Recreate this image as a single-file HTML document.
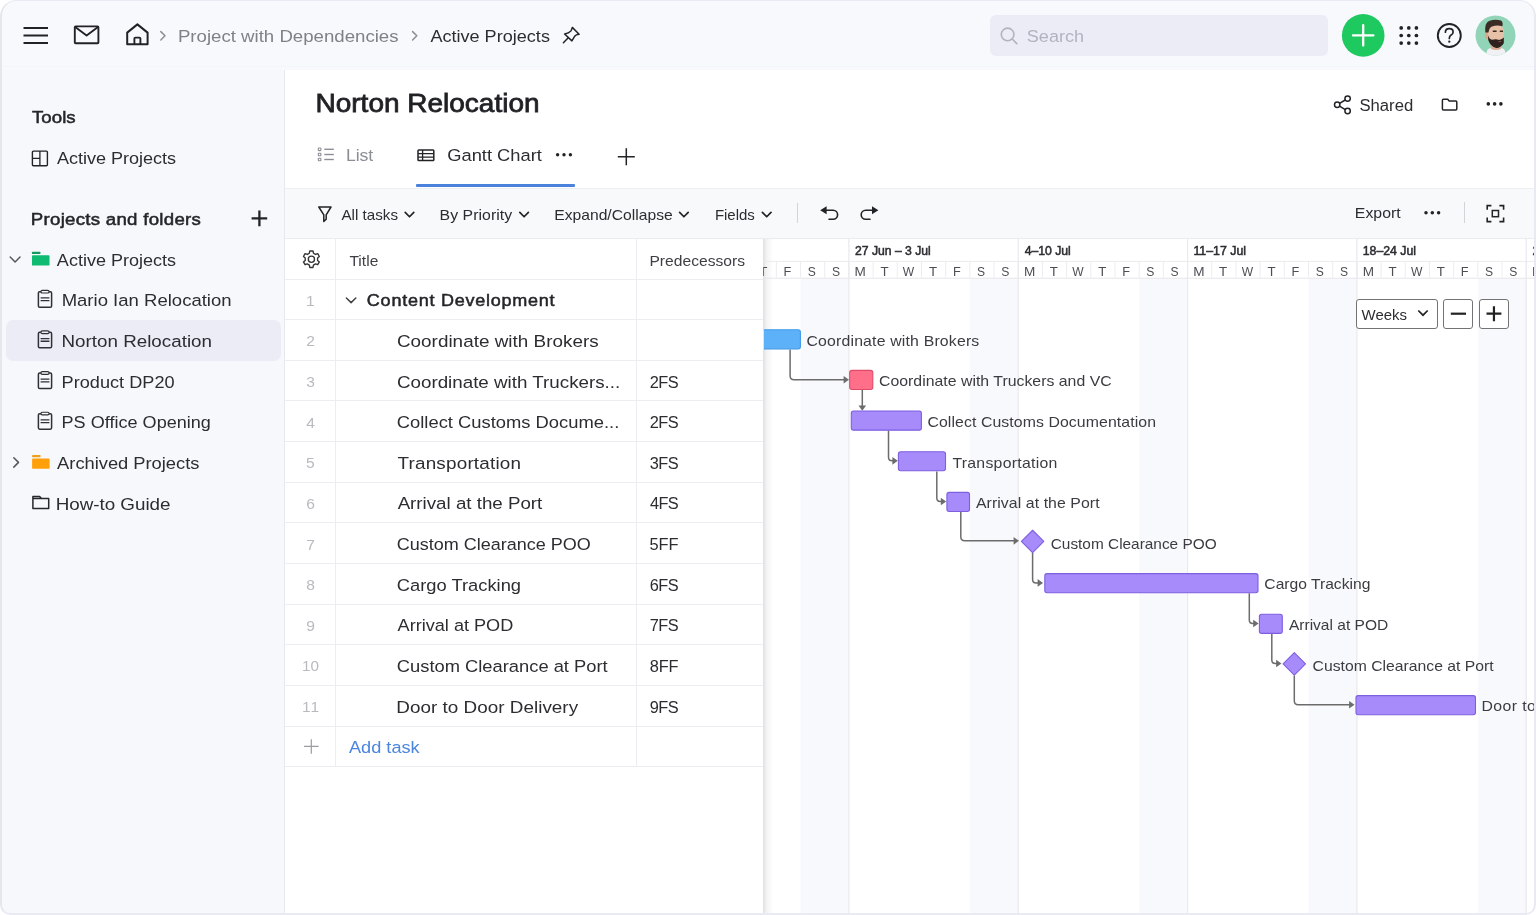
<!DOCTYPE html>
<html><head><meta charset="utf-8"><title>Norton Relocation - Gantt Chart</title>
<style>
*{box-sizing:border-box;margin:0;padding:0}
html,body{width:1536px;height:915px;background:#fff;overflow:hidden}
body{font-family:"Liberation Sans",sans-serif;position:relative}
#frame{position:absolute;left:0;top:0;width:1536px;height:915px;overflow:hidden;background:#fff;border-radius:16px 16px 10px 10px}
.a{position:absolute}
.t{position:absolute;white-space:pre;font-family:"Liberation Sans",sans-serif;left:0;top:0;transform-origin:0 0}
#txt{position:absolute;left:0;top:0;width:1536px;height:915px;will-change:transform}
svg{position:absolute;overflow:visible}
#edge{position:absolute;left:0;top:0;width:1536px;height:915px;border-radius:16px 16px 10px 10px;border:2px solid #eaeaf4;border-top-width:1.6px;border-bottom-width:2.4px;border-left-color:#e6e7ec;border-right-color:#e9e9f2;pointer-events:none}
</style></head>
<body>
<div id="frame">
<div class="a" style="left:0px;top:0px;width:1536px;height:70px;background:#f8f9fc;"></div>
<div class="a" style="left:0px;top:65.9px;width:1536px;height:1px;background:#f4f5f8;"></div>
<div class="a" style="left:0px;top:69.6px;width:1536px;height:1.1px;background:#ebecf0;"></div>
<div class="a" style="left:0px;top:70px;width:284px;height:845px;background:#f7f8fc;"></div>
<div class="a" style="left:284px;top:70px;width:1px;height:845px;background:#e8e9ee;"></div>
<div class="a" style="left:5.5px;top:319.8px;width:275px;height:41px;background:#ebecf5;border-radius:7px;"></div>
<div class="a" style="left:285px;top:70px;width:1251px;height:845px;background:#ffffff;"></div>
<div class="a" style="left:416px;top:184.0px;width:159px;height:3.0px;background:#4a82dc;border-radius:1px;"></div>
<div class="a" style="left:285px;top:188.4px;width:1251px;height:50px;background:#f8f9fb;"></div>
<div class="a" style="left:285px;top:187.5px;width:1251px;height:1px;background:#eeeff2;"></div>
<div class="a" style="left:285px;top:238px;width:1251px;height:1px;background:#ebecf0;"></div>
<div class="a" style="left:797.3px;top:203px;width:1.2px;height:20px;background:#d3d4da;"></div>
<div class="a" style="left:1463.8px;top:202px;width:1.2px;height:21px;background:#d3d4da;"></div>
<div class="a" style="left:990px;top:14.6px;width:338px;height:41.2px;background:#ebecf6;border-radius:6px;"></div>
<div class="a" style="left:285px;top:278.5px;width:478px;height:1px;background:#ededf1;"></div>
<div class="a" style="left:285px;top:319.15px;width:478px;height:1px;background:#ededf1;"></div>
<div class="a" style="left:285px;top:359.8px;width:478px;height:1px;background:#ededf1;"></div>
<div class="a" style="left:285px;top:400.45px;width:478px;height:1px;background:#ededf1;"></div>
<div class="a" style="left:285px;top:441.1px;width:478px;height:1px;background:#ededf1;"></div>
<div class="a" style="left:285px;top:481.75px;width:478px;height:1px;background:#ededf1;"></div>
<div class="a" style="left:285px;top:522.4px;width:478px;height:1px;background:#ededf1;"></div>
<div class="a" style="left:285px;top:563.05px;width:478px;height:1px;background:#ededf1;"></div>
<div class="a" style="left:285px;top:603.7px;width:478px;height:1px;background:#ededf1;"></div>
<div class="a" style="left:285px;top:644.35px;width:478px;height:1px;background:#ededf1;"></div>
<div class="a" style="left:285px;top:685.0px;width:478px;height:1px;background:#ededf1;"></div>
<div class="a" style="left:285px;top:725.65px;width:478px;height:1px;background:#ededf1;"></div>
<div class="a" style="left:285px;top:766.3px;width:478px;height:1px;background:#ededf1;"></div>
<div class="a" style="left:335px;top:239px;width:1px;height:527.8px;background:#ededf1;"></div>
<div class="a" style="left:635.5px;top:239px;width:1px;height:527.8px;background:#ededf1;"></div>
<div class="a" style="left:763px;top:239px;width:10px;height:676px;background:linear-gradient(90deg,rgba(40,44,60,0.15),rgba(40,44,60,0.06) 35%,rgba(40,44,60,0) 100%)"></div>
<svg class="a" style="left:763.5px;top:239px" width="772.5" height="676" viewBox="763.5 239 772.5 676">
<defs><clipPath id="gc"><rect x="763.5" y="239" width="772.5" height="676"/></clipPath></defs>
<g clip-path="url(#gc)">
<rect x="800.02" y="278.3" width="48.38" height="640" fill="#f8f9fc"/>
<rect x="969.35" y="278.3" width="48.38" height="640" fill="#f8f9fc"/>
<rect x="1138.68" y="278.3" width="48.38" height="640" fill="#f8f9fc"/>
<rect x="1308.01" y="278.3" width="48.38" height="640" fill="#f8f9fc"/>
<rect x="1477.34" y="278.3" width="48.38" height="640" fill="#f8f9fc"/>
<rect x="1646.67" y="278.3" width="48.38" height="640" fill="#f8f9fc"/>
<rect x="751.14" y="261.5" width="1" height="16" fill="#ededf1"/>
<rect x="775.33" y="261.5" width="1" height="16" fill="#ededf1"/>
<rect x="799.52" y="261.5" width="1" height="16" fill="#ededf1"/>
<rect x="823.71" y="261.5" width="1" height="16" fill="#ededf1"/>
<rect x="847.90" y="261.5" width="1" height="16" fill="#ededf1"/>
<rect x="872.09" y="261.5" width="1" height="16" fill="#ededf1"/>
<rect x="896.28" y="261.5" width="1" height="16" fill="#ededf1"/>
<rect x="920.47" y="261.5" width="1" height="16" fill="#ededf1"/>
<rect x="944.66" y="261.5" width="1" height="16" fill="#ededf1"/>
<rect x="968.85" y="261.5" width="1" height="16" fill="#ededf1"/>
<rect x="993.04" y="261.5" width="1" height="16" fill="#ededf1"/>
<rect x="1017.23" y="261.5" width="1" height="16" fill="#ededf1"/>
<rect x="1041.42" y="261.5" width="1" height="16" fill="#ededf1"/>
<rect x="1065.61" y="261.5" width="1" height="16" fill="#ededf1"/>
<rect x="1089.80" y="261.5" width="1" height="16" fill="#ededf1"/>
<rect x="1113.99" y="261.5" width="1" height="16" fill="#ededf1"/>
<rect x="1138.18" y="261.5" width="1" height="16" fill="#ededf1"/>
<rect x="1162.37" y="261.5" width="1" height="16" fill="#ededf1"/>
<rect x="1186.56" y="261.5" width="1" height="16" fill="#ededf1"/>
<rect x="1210.75" y="261.5" width="1" height="16" fill="#ededf1"/>
<rect x="1234.94" y="261.5" width="1" height="16" fill="#ededf1"/>
<rect x="1259.13" y="261.5" width="1" height="16" fill="#ededf1"/>
<rect x="1283.32" y="261.5" width="1" height="16" fill="#ededf1"/>
<rect x="1307.51" y="261.5" width="1" height="16" fill="#ededf1"/>
<rect x="1331.70" y="261.5" width="1" height="16" fill="#ededf1"/>
<rect x="1355.89" y="261.5" width="1" height="16" fill="#ededf1"/>
<rect x="1380.08" y="261.5" width="1" height="16" fill="#ededf1"/>
<rect x="1404.27" y="261.5" width="1" height="16" fill="#ededf1"/>
<rect x="1428.46" y="261.5" width="1" height="16" fill="#ededf1"/>
<rect x="1452.65" y="261.5" width="1" height="16" fill="#ededf1"/>
<rect x="1476.84" y="261.5" width="1" height="16" fill="#ededf1"/>
<rect x="1501.03" y="261.5" width="1" height="16" fill="#ededf1"/>
<rect x="1525.22" y="261.5" width="1" height="16" fill="#ededf1"/>
<rect x="1549.41" y="261.5" width="1" height="16" fill="#ededf1"/>
<rect x="763.5" y="260.9" width="780" height="1" fill="#ebebef"/>
<rect x="763.5" y="277.7" width="780" height="1" fill="#e6e6ea"/>
<rect x="847.80" y="239" width="1.2" height="680" fill="#e9e9ee"/>
<rect x="1017.13" y="239" width="1.2" height="680" fill="#e9e9ee"/>
<rect x="1186.46" y="239" width="1.2" height="680" fill="#e9e9ee"/>
<rect x="1355.79" y="239" width="1.2" height="680" fill="#e9e9ee"/>
<rect x="1525.12" y="239" width="1.2" height="680" fill="#e9e9ee"/>
<g transform="translate(-0.5,0.45)">
<path d="M790.1,349 V375.3 Q790.1,379.3 794.1,379.3 H846.0" fill="none" stroke="#6c6c6c" stroke-width="1.5"/><path d="M849.0,379.3 L843.6,375.5 L843.6,383.1 Z" fill="#6c6c6c"/>
<path d="M862.3,389.5 V406.5" fill="none" stroke="#6c6c6c" stroke-width="1.5"/><path d="M862.3,410.4 L858.5,405 L866.1,405 Z" fill="#6c6c6c"/>
<path d="M888.5,430 V456.9 Q888.5,460.4 892.0,460.4 H894.8" fill="none" stroke="#6c6c6c" stroke-width="1.5"/><path d="M897.8,460.4 L892.4,456.59999999999997 L892.4,464.2 Z" fill="#6c6c6c"/>
<path d="M936.8,471 V497.55 Q936.8,501.05 940.3,501.05 H943.2" fill="none" stroke="#6c6c6c" stroke-width="1.5"/><path d="M946.2,501.05 L940.8000000000001,497.25 L940.8000000000001,504.85 Z" fill="#6c6c6c"/>
<path d="M960.8,511.5 V536.4 Q960.8,540.4 964.8,540.4 H1016.0" fill="none" stroke="#6c6c6c" stroke-width="1.5"/><path d="M1019.0,540.4 L1013.6,536.6 L1013.6,544.1999999999999 Z" fill="#6c6c6c"/>
<path d="M1032.6,552 V578.95 Q1032.6,582.45 1036.1,582.45 H1040.0" fill="none" stroke="#6c6c6c" stroke-width="1.5"/><path d="M1043.0,582.45 L1037.6,578.6500000000001 L1037.6,586.25 Z" fill="#6c6c6c"/>
<path d="M1249.3,592.8 V619.5 Q1249.3,623.0 1252.8,623.0 H1255.6" fill="none" stroke="#6c6c6c" stroke-width="1.5"/><path d="M1258.6,623.0 L1253.1999999999998,619.2 L1253.1999999999998,626.8 Z" fill="#6c6c6c"/>
<path d="M1271.8,633.4 V659.5 Q1271.8,663.0 1275.3,663.0 H1278.5" fill="none" stroke="#6c6c6c" stroke-width="1.5"/><path d="M1281.5,663.0 L1276.1,659.2 L1276.1,666.8 Z" fill="#6c6c6c"/>
<path d="M1294.3,675 V700.3 Q1294.3,704.3 1298.3,704.3 H1351.5" fill="none" stroke="#6c6c6c" stroke-width="1.5"/><path d="M1354.5,704.3 L1349.1,700.5 L1349.1,708.0999999999999 Z" fill="#6c6c6c"/>
<rect x="750.50" y="329.30" width="49.90" height="19.1" rx="2.2" fill="#5cb1f8" stroke="#429ae8" stroke-width="1.1"/>
<rect x="849.70" y="369.95" width="23.10" height="19.1" rx="2.2" fill="#ff6f8a" stroke="#de4b68" stroke-width="1.1"/>
<rect x="851.30" y="410.60" width="70.10" height="19.1" rx="2.2" fill="#a78bfa" stroke="#7d5fe0" stroke-width="1.1"/>
<rect x="898.40" y="451.25" width="47.10" height="19.1" rx="2.2" fill="#a78bfa" stroke="#7d5fe0" stroke-width="1.1"/>
<rect x="946.90" y="491.90" width="22.60" height="19.1" rx="2.2" fill="#a78bfa" stroke="#7d5fe0" stroke-width="1.1"/>
<rect x="1044.80" y="573.20" width="213.20" height="19.1" rx="2.2" fill="#a78bfa" stroke="#7d5fe0" stroke-width="1.1"/>
<rect x="1259.40" y="613.85" width="22.90" height="19.1" rx="2.2" fill="#a78bfa" stroke="#7d5fe0" stroke-width="1.1"/>
<rect x="1356.00" y="695.15" width="119.50" height="19.1" rx="2.2" fill="#a78bfa" stroke="#7d5fe0" stroke-width="1.1"/>
<path d="M1021.3999999999999,541.0 L1032.6,529.8 L1043.8,541.0 L1032.6,552.2 Z" fill="#a78bfa" stroke="#7d5fe0" stroke-width="1.1" stroke-linejoin="round"/>
<path d="M1283.1,663.4 L1294.3,652.1999999999999 L1305.5,663.4 L1294.3,674.6 Z" fill="#a78bfa" stroke="#7d5fe0" stroke-width="1.1" stroke-linejoin="round"/>
</g>
</g></svg>
<div class="a" style="left:1355.6px;top:298.9px;width:82px;height:29.8px;background:#fff;border:1.25px solid #737373;border-radius:3px"></div>
<div class="a" style="left:1443.1px;top:298.9px;width:30.2px;height:29.8px;background:#fff;border:1.25px solid #737373;border-radius:3px"></div>
<div class="a" style="left:1479.1px;top:298.9px;width:29.6px;height:29.8px;background:#fff;border:1.25px solid #737373;border-radius:3px"></div>
<svg class="a" style="left:0;top:0" width="1536" height="915" viewBox="0 0 1536 915"><path d="M1418.3,310.5 L1423,315.2 L1427.7,310.5" fill="none" stroke="#222" stroke-width="1.7"/><path d="M1450.8,313.7 H1466" stroke="#222" stroke-width="2.2"/><path d="M1486.5,313.7 H1501.4 M1493.95,306.2 V321.2" stroke="#222" stroke-width="2.2"/></svg>
<svg class="a" style="left:0;top:0" width="1536" height="915" viewBox="0 0 1536 915">
<path d="M23.5,28 H48 M23.5,35.5 H48 M23.5,43 H48" stroke="#222326" stroke-width="2"/>
<rect x="74.8" y="26.4" width="23.6" height="16.8" rx="0.8" fill="none" stroke="#222326" stroke-width="1.9"/>
<path d="M75.2,27 L86.6,35.6 L98,27" fill="none" stroke="#222326" stroke-width="1.9" stroke-linejoin="round"/>
<path d="M127.2,44.3 V32.6 L137.4,24.4 L147.6,32.6 V44.3 Z" fill="none" stroke="#222326" stroke-width="2" stroke-linejoin="round"/>
<path d="M134.4,44.3 V38.6 q0,-1 1,-1 h4 q1,0 1,1 V44.3" fill="none" stroke="#222326" stroke-width="1.9"/>
<path d="M160.8,31.60 L165.0,35.8 L160.8,40.00" fill="none" stroke="#8d8f96" stroke-width="1.5" stroke-linecap="round" stroke-linejoin="round"/>
<path d="M412.6,31.60 L416.8,35.8 L412.6,40.00" fill="none" stroke="#8d8f96" stroke-width="1.5" stroke-linecap="round" stroke-linejoin="round"/>
<path d="M572.3,27.4 L579.1,34.2 Q575.5,34.6 574.6,36.4 Q573.2,38.8 571.9,40.9 L564.6,34 Q569,33.2 570.7,31.1 Q571.8,29.6 572.3,27.4 Z M568,38 L563.4,42.8" fill="none" stroke="#222326" stroke-width="1.5" stroke-linejoin="round" stroke-linecap="round"/>
<circle cx="1007.6" cy="34.4" r="6.3" fill="none" stroke="#b1b3bf" stroke-width="1.6"/><path d="M1012.2,39 L1016.8,43.6" stroke="#b1b3bf" stroke-width="1.6" stroke-linecap="round"/>
<circle cx="1363.2" cy="35.4" r="21.3" fill="#1ec960"/><path d="M1353,35.4 H1373.4 M1363.2,25.2 V45.6" stroke="#fff" stroke-width="2.3" stroke-linecap="round"/>
<circle cx="1401.2" cy="27.9" r="1.85" fill="#222326"/><circle cx="1408.8" cy="27.9" r="1.85" fill="#222326"/><circle cx="1416.4" cy="27.9" r="1.85" fill="#222326"/>
<circle cx="1401.2" cy="35.5" r="1.85" fill="#222326"/><circle cx="1408.8" cy="35.5" r="1.85" fill="#222326"/><circle cx="1416.4" cy="35.5" r="1.85" fill="#222326"/>
<circle cx="1401.2" cy="43.1" r="1.85" fill="#222326"/><circle cx="1408.8" cy="43.1" r="1.85" fill="#222326"/><circle cx="1416.4" cy="43.1" r="1.85" fill="#222326"/>
<circle cx="1449.3" cy="35.5" r="11.5" fill="none" stroke="#222326" stroke-width="1.9"/>
<path d="M1445.4,32.2 q0,-3.6 3.9,-3.6 q3.8,0 3.8,3.3 q0,2 -2,3.2 q-1.8,1.1 -1.8,3.3" fill="none" stroke="#222326" stroke-width="1.7" stroke-linecap="round"/><circle cx="1449.3" cy="41.7" r="1.15" fill="#222326"/>
<defs><clipPath id="av"><circle cx="1495.5" cy="35.4" r="20"/></clipPath></defs>
<circle cx="1495.5" cy="35.4" r="20" fill="#92d4b8"/>
<g clip-path="url(#av)"><path d="M1484.5,58 L1487.6,49.6 Q1491.5,46.4 1496,48 Q1500.5,46.6 1504.4,49.6 L1507,58 Z" fill="#f1f0f5"/><path d="M1490.5,44 L1501.5,44 L1501,49 Q1496,51 1491,49 Z" fill="#d9ad92"/><ellipse cx="1486.8" cy="35.4" rx="1.9" ry="3.7" fill="#d9a98c"/><path d="M1488,26.5 Q1488.4,24 1495,24.3 Q1503,24.8 1503.7,30 L1503.9,40 Q1500.5,46.5 1496,46.5 Q1490,45.5 1488,38 Z" fill="#e6c0a7"/><path d="M1485.3,32.4 Q1484.4,23 1489,21 Q1495,18.6 1501,20.4 Q1503.4,22 1502.4,26.2 Q1497,24.9 1492,26.4 Q1489.2,27.4 1488.5,32.4 Z" fill="#3b2b25"/><path d="M1488,35.2 Q1489.4,39.2 1492,39.8 Q1496,38.4 1499,40 Q1502,39.2 1503.9,37.4 L1503.8,43.2 Q1500.6,48.2 1496.2,48 Q1490.4,46.6 1488.2,40 Z" fill="#2f221e"/><path d="M1492.8,31.2 h3.8 M1499.8,31.2 h3.2" stroke="#3c261e" stroke-width="1.5"/><path d="M1498.6,41.6 h2.6" stroke="#8a5a4a" stroke-width="0.9"/></g>
<circle cx="1347.6" cy="98.6" r="2.7" fill="none" stroke="#222326" stroke-width="1.5"/><circle cx="1337.2" cy="104.8" r="2.7" fill="none" stroke="#222326" stroke-width="1.5"/><circle cx="1347.6" cy="111" r="2.7" fill="none" stroke="#222326" stroke-width="1.5"/><path d="M1339.6,103.4 L1345.2,100 M1339.6,106.2 L1345.2,109.6" stroke="#222326" stroke-width="1.5"/>
<path d="M1442.4,100.2 q0,-1 1,-1 h4.32 l1.44,1.84 h6.64 q1,0 1,1 v6.96 q0,1 -1,1 h-12.4 q-1,0 -1,-1 z" fill="none" stroke="#222326" stroke-width="1.5" stroke-linejoin="round"/>
<circle cx="1488.3" cy="103.9" r="1.8" fill="#222326"/><circle cx="1494.6" cy="103.9" r="1.8" fill="#222326"/><circle cx="1500.9" cy="103.9" r="1.8" fill="#222326"/>
<rect x="318.3" y="148.0" width="2.6" height="2.6" rx="0.6" fill="none" stroke="#8b8e95" stroke-width="1.1"/><path d="M324.3,149.3 H333.8" stroke="#8b8e95" stroke-width="1.4"/>
<rect x="318.3" y="153.2" width="2.6" height="2.6" rx="0.6" fill="none" stroke="#8b8e95" stroke-width="1.1"/><path d="M324.3,154.5 H333.8" stroke="#8b8e95" stroke-width="1.4"/>
<rect x="318.3" y="158.2" width="2.6" height="2.6" rx="0.6" fill="none" stroke="#8b8e95" stroke-width="1.1"/><path d="M324.3,159.5 H333.8" stroke="#8b8e95" stroke-width="1.4"/>
<rect x="418" y="150" width="15.8" height="10.6" rx="0.8" fill="none" stroke="#222326" stroke-width="1.5"/><path d="M418,153.6 H433.8 M418,157.1 H433.8 M422.6,150 V160.6" stroke="#222326" stroke-width="1.3"/>
<circle cx="557.6" cy="154.7" r="1.7" fill="#222326"/><circle cx="564" cy="154.7" r="1.7" fill="#222326"/><circle cx="570.4" cy="154.7" r="1.7" fill="#222326"/>
<path d="M617.8,156.8 H634.8 M626.3,148.3 V165.3" stroke="#222326" stroke-width="1.5"/>
<path d="M318.8,207 H331 L326.2,214.8 V219.2 L323.8,221.4 V214.8 Z" fill="none" stroke="#222326" stroke-width="1.5" stroke-linejoin="round"/>
<path d="M405.2,212.45 L409.50,216.75 L413.8,212.45" fill="none" stroke="#222326" stroke-width="1.7" stroke-linecap="round" stroke-linejoin="round"/>
<path d="M519.8,212.45 L524.10,216.75 L528.4,212.45" fill="none" stroke="#222326" stroke-width="1.7" stroke-linecap="round" stroke-linejoin="round"/>
<path d="M679.6,212.45 L683.90,216.75 L688.2,212.45" fill="none" stroke="#222326" stroke-width="1.7" stroke-linecap="round" stroke-linejoin="round"/>
<path d="M762.4,212.45 L766.70,216.75 L771.0,212.45" fill="none" stroke="#222326" stroke-width="1.7" stroke-linecap="round" stroke-linejoin="round"/>
<path d="M826,210.2 H833.1 A4.5,4.5 0 0 1 833.1,219.2 H829" fill="none" stroke="#222326" stroke-width="1.6" stroke-linecap="round"/><path d="M820.2,210.2 L826.6,206.2 L826.6,214.2 Z" fill="#222326"/>
<path d="M872.4,210.2 H865.7 A4.5,4.5 0 0 0 865.7,219.2 H870" fill="none" stroke="#222326" stroke-width="1.6" stroke-linecap="round"/><path d="M878.4,210.2 L872,206.2 L872,214.2 Z" fill="#222326"/>
<circle cx="1426" cy="212.8" r="1.75" fill="#222326"/><circle cx="1432.3" cy="212.8" r="1.75" fill="#222326"/><circle cx="1438.6" cy="212.8" r="1.75" fill="#222326"/>
<path d="M1487.2,209.79999999999998 V205.6 H1491.4 M1499.3999999999999,205.6 H1503.6 V209.79999999999998 M1503.6,217.4 V221.6 H1499.3999999999999 M1491.4,221.6 H1487.2 V217.4" fill="none" stroke="#222326" stroke-width="1.6"/>
<rect x="1492.3" y="210.5" width="6.2" height="6.2" fill="none" stroke="#222326" stroke-width="1.5"/>
<path d="M309.35,253.24 L309.80,250.95 L313.00,250.95 L313.45,253.24 L315.53,254.45 L317.74,253.69 L319.34,256.47 L317.58,258.00 L317.58,260.40 L319.34,261.93 L317.74,264.71 L315.53,263.95 L313.45,265.16 L313.00,267.45 L309.80,267.45 L309.35,265.16 L307.27,263.95 L305.06,264.71 L303.46,261.93 L305.22,260.40 L305.22,258.00 L303.46,256.47 L305.06,253.69 L307.27,254.45 Z" fill="none" stroke="#333" stroke-width="1.35" stroke-linejoin="round"/><circle cx="311.4" cy="259.2" r="3.1" fill="none" stroke="#333" stroke-width="1.35"/>
<rect x="32.4" y="151.1" width="15" height="14.6" rx="1" fill="none" stroke="#222326" stroke-width="1.4"/><path d="M39.9,151.1 V165.7 M32.4,158.4 H39.9" stroke="#222326" stroke-width="1.3"/>
<path d="M251.6,218.4 H267.2 M259.4,210.6 V226.2" stroke="#222326" stroke-width="2.3"/>
<path d="M10.2,257.05 L15.10,261.95 L20.0,257.05" fill="none" stroke="#55575c" stroke-width="1.5" stroke-linecap="round" stroke-linejoin="round"/>
<path d="M13.8,457.70 L18.5,462.4 L13.8,467.10" fill="none" stroke="#55575c" stroke-width="1.5" stroke-linecap="round" stroke-linejoin="round"/>
<rect x="32.0" y="251.8" width="8.4" height="2.2" rx="0.5" fill="#14995f"/><rect x="32.0" y="255.35000000000002" width="17.5" height="10.25" rx="0.9" fill="#0fbb70"/>
<rect x="32.1" y="455.0" width="8.4" height="2.2" rx="0.5" fill="#eda21e"/><rect x="32.1" y="458.55" width="17.5" height="10.25" rx="0.9" fill="#ffa00a"/>
<path d="M32.9,496.5 H39.6 L41.6,498.6 H48.7 V508.5 H32.9 Z M32.9,498.6 H41.6" fill="none" stroke="#26282c" stroke-width="1.5" stroke-linejoin="round"/>
<rect x="38.4" y="291.7" width="13.2" height="15.5" rx="1.3" fill="none" stroke="#2f3136" stroke-width="1.5"/><rect x="40.9" y="290.3" width="8.2" height="2.7" rx="1.35" fill="#f7f8fc" stroke="#2f3136" stroke-width="1.2"/><path d="M40.6,297.9 H49.4 M40.6,300.6 H49.4" stroke="#2f3136" stroke-width="1.3"/>
<rect x="38.4" y="332.34999999999997" width="13.2" height="15.5" rx="1.3" fill="none" stroke="#2f3136" stroke-width="1.5"/><rect x="40.9" y="330.95" width="8.2" height="2.7" rx="1.35" fill="#ebecf5" stroke="#2f3136" stroke-width="1.2"/><path d="M40.6,338.54999999999995 H49.4 M40.6,341.25 H49.4" stroke="#2f3136" stroke-width="1.3"/>
<rect x="38.4" y="373.0" width="13.2" height="15.5" rx="1.3" fill="none" stroke="#2f3136" stroke-width="1.5"/><rect x="40.9" y="371.6" width="8.2" height="2.7" rx="1.35" fill="#f7f8fc" stroke="#2f3136" stroke-width="1.2"/><path d="M40.6,379.2 H49.4 M40.6,381.90000000000003 H49.4" stroke="#2f3136" stroke-width="1.3"/>
<rect x="38.4" y="413.65" width="13.2" height="15.5" rx="1.3" fill="none" stroke="#2f3136" stroke-width="1.5"/><rect x="40.9" y="412.25" width="8.2" height="2.7" rx="1.35" fill="#f7f8fc" stroke="#2f3136" stroke-width="1.2"/><path d="M40.6,419.84999999999997 H49.4 M40.6,422.55 H49.4" stroke="#2f3136" stroke-width="1.3"/>
<path d="M346.4,297.95 L351.10,302.65 L355.8,297.95" fill="none" stroke="#444" stroke-width="1.5" stroke-linecap="round" stroke-linejoin="round"/>
<path d="M304,746.4499999999999 H318.6 M311.3,739.15 V753.7499999999999" stroke="#9a9ca3" stroke-width="1.2"/>
</svg>
<div id="txt">
<span class="t" style="font-size:17.2px;line-height:17.2px;color:#7f8188;letter-spacing:0.004px;transform:translate(177.89px,28.00px) scaleX(1.0838);">Project with Dependencies</span>
<span class="t" style="font-size:17.2px;line-height:17.2px;color:#2b2d31;letter-spacing:0.003px;transform:translate(430.38px,28.00px) scaleX(1.0512);">Active Projects</span>
<span class="t" style="font-size:17.2px;line-height:17.2px;color:#b1b3bf;letter-spacing:0.024px;transform:translate(1026.74px,28.00px) scaleX(1.0510);">Search</span>
<span class="t" style="font-size:26.0px;line-height:26.0px;color:#1f2125;letter-spacing:0.001px;transform:translate(315.50px,90.00px) scaleX(1.0766);-webkit-text-stroke:0.78px #1f2125;">Norton Relocation</span>
<span class="t" style="font-size:15.6px;line-height:15.6px;color:#2b2d31;letter-spacing:0.015px;transform:translate(1359.39px,98.00px) scaleX(1.0695);">Shared</span>
<span class="t" style="font-size:17.2px;line-height:17.2px;color:#8b8e95;letter-spacing:-0.059px;transform:translate(345.89px,147.00px) scaleX(1.0307);">List</span>
<span class="t" style="font-size:17.2px;line-height:17.2px;color:#2b2d31;letter-spacing:0.008px;transform:translate(447.21px,147.00px) scaleX(1.0651);">Gantt Chart</span>
<span class="t" style="font-size:14.6px;line-height:14.6px;color:#2b2d31;letter-spacing:0.014px;transform:translate(341.42px,208.00px) scaleX(1.0386);">All tasks</span>
<span class="t" style="font-size:14.6px;line-height:14.6px;color:#2b2d31;letter-spacing:0.049px;transform:translate(439.52px,208.00px) scaleX(1.0850);">By Priority</span>
<span class="t" style="font-size:14.6px;line-height:14.6px;color:#2b2d31;letter-spacing:0.010px;transform:translate(554.24px,208.00px) scaleX(1.0722);">Expand/Collapse</span>
<span class="t" style="font-size:14.6px;line-height:14.6px;color:#2b2d31;letter-spacing:-0.023px;transform:translate(714.92px,208.00px) scaleX(1.0269);">Fields</span>
<span class="t" style="font-size:14.6px;line-height:14.6px;color:#2b2d31;letter-spacing:0.034px;transform:translate(1354.82px,206.00px) scaleX(1.0847);">Export</span>
<span class="t" style="font-size:17.2px;line-height:17.2px;color:#24262a;letter-spacing:0.050px;transform:translate(31.90px,109.00px) scaleX(1.0850);-webkit-text-stroke:0.52px #24262a;">Tools</span>
<span class="t" style="font-size:17.4px;line-height:17.4px;color:#2b2d31;letter-spacing:-0.014px;transform:translate(56.91px,150.00px) scaleX(1.0385);">Active Projects</span>
<span class="t" style="font-size:17.2px;line-height:17.2px;color:#24262a;letter-spacing:0.255px;transform:translate(30.78px,211.00px) scaleX(1.0850);-webkit-text-stroke:0.52px #24262a;">Projects and folders</span>
<span class="t" style="font-size:17.4px;line-height:17.4px;color:#2b2d31;letter-spacing:0.002px;transform:translate(56.87px,252.00px) scaleX(1.0359);">Active Projects</span>
<span class="t" style="font-size:17.4px;line-height:17.4px;color:#2b2d31;letter-spacing:0.006px;transform:translate(61.63px,292.00px) scaleX(1.0649);">Mario Ian Relocation</span>
<span class="t" style="font-size:17.4px;line-height:17.4px;color:#2b2d31;letter-spacing:0.012px;transform:translate(61.48px,333.00px) scaleX(1.0799);">Norton Relocation</span>
<span class="t" style="font-size:17.4px;line-height:17.4px;color:#2b2d31;letter-spacing:0.031px;transform:translate(61.52px,374.00px) scaleX(1.0419);">Product DP20</span>
<span class="t" style="font-size:17.4px;line-height:17.4px;color:#2b2d31;letter-spacing:0.020px;transform:translate(61.55px,414.00px) scaleX(1.0368);">PS Office Opening</span>
<span class="t" style="font-size:17.4px;line-height:17.4px;color:#2b2d31;letter-spacing:-0.020px;transform:translate(57.10px,455.00px) scaleX(1.0540);">Archived Projects</span>
<span class="t" style="font-size:17.4px;line-height:17.4px;color:#2b2d31;letter-spacing:-0.020px;transform:translate(55.65px,496.00px) scaleX(1.0827);">How-to Guide</span>
<span class="t" style="font-size:14.6px;line-height:14.6px;color:#3d3f44;letter-spacing:0.014px;transform:translate(349.42px,254.00px) scaleX(1.0659);">Title</span>
<span class="t" style="font-size:14.6px;line-height:14.6px;color:#3d3f44;letter-spacing:0.017px;transform:translate(649.41px,254.00px) scaleX(1.0701);">Predecessors</span>
<span class="t" style="font-size:16.6px;line-height:16.6px;color:#24262a;letter-spacing:0.698px;transform:translate(366.85px,293.00px) scaleX(1.0850);-webkit-text-stroke:0.5px #24262a;">Content Development</span>
<span class="t" style="font-size:14.4px;line-height:14.4px;color:#b9bac0;letter-spacing:0.000px;transform:translate(306.01px,294.00px) scaleX(1.0850);">1</span>
<span class="t" style="font-size:17.4px;line-height:17.4px;color:#2b2d31;letter-spacing:0.020px;transform:translate(396.91px,333.00px) scaleX(1.0850);">Coordinate with Brokers</span>
<span class="t" style="font-size:14.4px;line-height:14.4px;color:#b9bac0;letter-spacing:0.000px;transform:translate(306.24px,334.00px) scaleX(1.0850);">2</span>
<span class="t" style="font-size:17.4px;line-height:17.4px;color:#2b2d31;letter-spacing:-0.006px;transform:translate(396.98px,374.00px) scaleX(1.0802);">Coordinate with Truckers...</span>
<span class="t" style="font-size:17.4px;line-height:17.4px;color:#2b2d31;letter-spacing:-0.593px;transform:translate(649.73px,374.00px) scaleX(0.9400);">2FS</span>
<span class="t" style="font-size:14.4px;line-height:14.4px;color:#b9bac0;letter-spacing:0.000px;transform:translate(306.21px,375.00px) scaleX(1.0850);">3</span>
<span class="t" style="font-size:17.4px;line-height:17.4px;color:#2b2d31;letter-spacing:0.000px;transform:translate(396.80px,414.00px) scaleX(1.0560);">Collect Customs Docume...</span>
<span class="t" style="font-size:17.4px;line-height:17.4px;color:#2b2d31;letter-spacing:-0.593px;transform:translate(649.73px,414.00px) scaleX(0.9400);">2FS</span>
<span class="t" style="font-size:14.4px;line-height:14.4px;color:#b9bac0;letter-spacing:0.000px;transform:translate(306.32px,416.00px) scaleX(1.0850);">4</span>
<span class="t" style="font-size:17.4px;line-height:17.4px;color:#2b2d31;letter-spacing:0.187px;transform:translate(397.44px,455.00px) scaleX(1.0850);">Transportation</span>
<span class="t" style="font-size:17.4px;line-height:17.4px;color:#2b2d31;letter-spacing:-0.616px;transform:translate(649.78px,455.00px) scaleX(0.9400);">3FS</span>
<span class="t" style="font-size:14.4px;line-height:14.4px;color:#b9bac0;letter-spacing:0.000px;transform:translate(306.02px,456.00px) scaleX(1.0850);">5</span>
<span class="t" style="font-size:17.4px;line-height:17.4px;color:#2b2d31;letter-spacing:-0.000px;transform:translate(397.63px,495.00px) scaleX(1.0769);">Arrival at the Port</span>
<span class="t" style="font-size:17.4px;line-height:17.4px;color:#2b2d31;letter-spacing:-0.796px;transform:translate(650.11px,495.00px) scaleX(0.9400);">4FS</span>
<span class="t" style="font-size:14.4px;line-height:14.4px;color:#b9bac0;letter-spacing:0.000px;transform:translate(306.17px,497.00px) scaleX(1.0850);">6</span>
<span class="t" style="font-size:17.4px;line-height:17.4px;color:#2b2d31;letter-spacing:-0.012px;transform:translate(396.85px,536.00px) scaleX(1.0348);">Custom Clearance POO</span>
<span class="t" style="font-size:17.4px;line-height:17.4px;color:#2b2d31;letter-spacing:-0.000px;transform:translate(649.40px,536.00px) scaleX(0.9428);">5FF</span>
<span class="t" style="font-size:14.4px;line-height:14.4px;color:#b9bac0;letter-spacing:0.000px;transform:translate(306.19px,538.00px) scaleX(1.0850);">7</span>
<span class="t" style="font-size:17.4px;line-height:17.4px;color:#2b2d31;letter-spacing:0.001px;transform:translate(396.80px,577.00px) scaleX(1.0535);">Cargo Tracking</span>
<span class="t" style="font-size:17.4px;line-height:17.4px;color:#2b2d31;letter-spacing:-0.561px;transform:translate(649.67px,577.00px) scaleX(0.9400);">6FS</span>
<span class="t" style="font-size:14.4px;line-height:14.4px;color:#b9bac0;letter-spacing:0.000px;transform:translate(306.23px,578.00px) scaleX(1.0850);">8</span>
<span class="t" style="font-size:17.4px;line-height:17.4px;color:#2b2d31;letter-spacing:-0.007px;transform:translate(397.61px,617.00px) scaleX(1.0417);">Arrival at POD</span>
<span class="t" style="font-size:17.4px;line-height:17.4px;color:#2b2d31;letter-spacing:-0.548px;transform:translate(649.65px,617.00px) scaleX(0.9400);">7FS</span>
<span class="t" style="font-size:14.4px;line-height:14.4px;color:#b9bac0;letter-spacing:0.000px;transform:translate(306.13px,619.00px) scaleX(1.0850);">9</span>
<span class="t" style="font-size:17.4px;line-height:17.4px;color:#2b2d31;letter-spacing:0.005px;transform:translate(396.80px,658.00px) scaleX(1.0533);">Custom Clearance at Port</span>
<span class="t" style="font-size:17.4px;line-height:17.4px;color:#2b2d31;letter-spacing:-0.103px;transform:translate(649.70px,658.00px) scaleX(0.9400);">8FF</span>
<span class="t" style="font-size:14.4px;line-height:14.4px;color:#b9bac0;letter-spacing:-0.023px;transform:translate(302.03px,659.00px) scaleX(1.0587);">10</span>
<span class="t" style="font-size:17.4px;line-height:17.4px;color:#2b2d31;letter-spacing:0.016px;transform:translate(396.35px,699.00px) scaleX(1.0850);">Door to Door Delivery</span>
<span class="t" style="font-size:17.4px;line-height:17.4px;color:#2b2d31;letter-spacing:-0.571px;transform:translate(649.69px,699.00px) scaleX(0.9400);">9FS</span>
<span class="t" style="font-size:14.4px;line-height:14.4px;color:#b9bac0;letter-spacing:0.895px;transform:translate(301.89px,700.00px) scaleX(1.0850);">11</span>
<span class="t" style="font-size:17.4px;line-height:17.4px;color:#4a86de;letter-spacing:0.002px;transform:translate(348.95px,739.00px) scaleX(1.0453);">Add task</span>
<span class="t" style="font-size:14.6px;line-height:14.6px;color:#3a3c41;letter-spacing:0.161px;transform:translate(806.44px,334.00px) scaleX(1.0850);">Coordinate with Brokers</span>
<span class="t" style="font-size:14.6px;line-height:14.6px;color:#3a3c41;letter-spacing:0.011px;transform:translate(878.98px,374.00px) scaleX(1.0850);">Coordinate with Truckers and VC</span>
<span class="t" style="font-size:14.6px;line-height:14.6px;color:#3a3c41;letter-spacing:0.077px;transform:translate(927.44px,415.00px) scaleX(1.0850);">Collect Customs Documentation</span>
<span class="t" style="font-size:14.6px;line-height:14.6px;color:#3a3c41;letter-spacing:0.249px;transform:translate(952.38px,456.00px) scaleX(1.0850);">Transportation</span>
<span class="t" style="font-size:14.6px;line-height:14.6px;color:#3a3c41;letter-spacing:0.068px;transform:translate(975.95px,496.00px) scaleX(1.0850);">Arrival at the Port</span>
<span class="t" style="font-size:14.6px;line-height:14.6px;color:#3a3c41;letter-spacing:0.001px;transform:translate(1050.72px,537.00px) scaleX(1.0545);">Custom Clearance POO</span>
<span class="t" style="font-size:14.6px;line-height:14.6px;color:#3a3c41;letter-spacing:-0.001px;transform:translate(1264.35px,577.00px) scaleX(1.0712);">Cargo Tracking</span>
<span class="t" style="font-size:14.6px;line-height:14.6px;color:#3a3c41;letter-spacing:0.010px;transform:translate(1288.90px,618.00px) scaleX(1.0643);">Arrival at POD</span>
<span class="t" style="font-size:14.6px;line-height:14.6px;color:#3a3c41;letter-spacing:0.000px;transform:translate(1312.61px,659.00px) scaleX(1.0782);">Custom Clearance at Port</span>
<span class="t" style="font-size:14.6px;line-height:14.6px;color:#3a3c41;letter-spacing:0.359px;transform:translate(1481.54px,699.00px) scaleX(1.0850);">Door to Door Delivery</span>
<span class="t" style="font-size:12.1px;line-height:12.1px;color:#2a2c30;letter-spacing:-0.020px;transform:translate(855.11px,245.00px) scaleX(1.0072);-webkit-text-stroke:0.5px #2a2c30;">27 Jun – 3 Jul</span>
<span class="t" style="font-size:12.1px;line-height:12.1px;color:#2a2c30;letter-spacing:-0.034px;transform:translate(1024.68px,245.00px) scaleX(1.0121);-webkit-text-stroke:0.5px #2a2c30;">4–10 Jul</span>
<span class="t" style="font-size:12.1px;line-height:12.1px;color:#2a2c30;letter-spacing:0.006px;transform:translate(1193.38px,245.00px) scaleX(1.0217);-webkit-text-stroke:0.5px #2a2c30;">11–17 Jul</span>
<span class="t" style="font-size:12.1px;line-height:12.1px;color:#2a2c30;letter-spacing:-0.008px;transform:translate(1362.76px,245.00px) scaleX(1.0156);-webkit-text-stroke:0.5px #2a2c30;">18–24 Jul</span>
<span class="t" style="font-size:12.1px;line-height:12.1px;color:#2a2c30;letter-spacing:-0.011px;transform:translate(1532.44px,245.00px) scaleX(1.0109);-webkit-text-stroke:0.5px #2a2c30;">25–31 Jul</span>
<span class="t" style="font-size:12.5px;line-height:12.5px;color:#4c4e54;letter-spacing:0.000px;transform:translate(759.37px,266.00px) scaleX(1.0631);clip-path:inset(-5px -5px -5px 3.60px);">T</span>
<span class="t" style="font-size:12.5px;line-height:12.5px;color:#4c4e54;letter-spacing:0.000px;transform:translate(783.59px,266.00px) scaleX(1.0180);">F</span>
<span class="t" style="font-size:12.5px;line-height:12.5px;color:#4c4e54;letter-spacing:0.000px;transform:translate(807.76px,266.00px) scaleX(0.9700);">S</span>
<span class="t" style="font-size:12.5px;line-height:12.5px;color:#4c4e54;letter-spacing:0.000px;transform:translate(831.98px,266.00px) scaleX(0.9695);">S</span>
<span class="t" style="font-size:12.5px;line-height:12.5px;color:#4c4e54;letter-spacing:0.000px;transform:translate(854.58px,266.00px) scaleX(1.0850);">M</span>
<span class="t" style="font-size:12.5px;line-height:12.5px;color:#4c4e54;letter-spacing:0.000px;transform:translate(880.49px,266.00px) scaleX(1.0631);">T</span>
<span class="t" style="font-size:12.5px;line-height:12.5px;color:#4c4e54;letter-spacing:0.000px;transform:translate(902.87px,266.00px) scaleX(0.9669);">W</span>
<span class="t" style="font-size:12.5px;line-height:12.5px;color:#4c4e54;letter-spacing:0.000px;transform:translate(928.88px,266.00px) scaleX(1.0649);">T</span>
<span class="t" style="font-size:12.5px;line-height:12.5px;color:#4c4e54;letter-spacing:0.000px;transform:translate(952.88px,266.00px) scaleX(1.0161);">F</span>
<span class="t" style="font-size:12.5px;line-height:12.5px;color:#4c4e54;letter-spacing:0.000px;transform:translate(977.12px,266.00px) scaleX(0.9672);">S</span>
<span class="t" style="font-size:12.5px;line-height:12.5px;color:#4c4e54;letter-spacing:0.000px;transform:translate(1001.14px,266.00px) scaleX(0.9728);">S</span>
<span class="t" style="font-size:12.5px;line-height:12.5px;color:#4c4e54;letter-spacing:0.000px;transform:translate(1024.05px,266.00px) scaleX(1.0850);">M</span>
<span class="t" style="font-size:12.5px;line-height:12.5px;color:#4c4e54;letter-spacing:0.000px;transform:translate(1049.78px,266.00px) scaleX(1.0649);">T</span>
<span class="t" style="font-size:12.5px;line-height:12.5px;color:#4c4e54;letter-spacing:0.000px;transform:translate(1072.27px,266.00px) scaleX(0.9646);">W</span>
<span class="t" style="font-size:12.5px;line-height:12.5px;color:#4c4e54;letter-spacing:0.000px;transform:translate(1098.19px,266.00px) scaleX(1.0649);">T</span>
<span class="t" style="font-size:12.5px;line-height:12.5px;color:#4c4e54;letter-spacing:0.000px;transform:translate(1122.14px,266.00px) scaleX(1.0187);">F</span>
<span class="t" style="font-size:12.5px;line-height:12.5px;color:#4c4e54;letter-spacing:0.000px;transform:translate(1146.32px,266.00px) scaleX(0.9728);">S</span>
<span class="t" style="font-size:12.5px;line-height:12.5px;color:#4c4e54;letter-spacing:0.000px;transform:translate(1170.48px,266.00px) scaleX(0.9700);">S</span>
<span class="t" style="font-size:12.5px;line-height:12.5px;color:#4c4e54;letter-spacing:0.000px;transform:translate(1193.37px,266.00px) scaleX(1.0850);">M</span>
<span class="t" style="font-size:12.5px;line-height:12.5px;color:#4c4e54;letter-spacing:0.000px;transform:translate(1219.10px,266.00px) scaleX(1.0649);">T</span>
<span class="t" style="font-size:12.5px;line-height:12.5px;color:#4c4e54;letter-spacing:0.000px;transform:translate(1241.67px,266.00px) scaleX(0.9636);">W</span>
<span class="t" style="font-size:12.5px;line-height:12.5px;color:#4c4e54;letter-spacing:0.000px;transform:translate(1267.53px,266.00px) scaleX(1.0631);">T</span>
<span class="t" style="font-size:12.5px;line-height:12.5px;color:#4c4e54;letter-spacing:0.000px;transform:translate(1291.52px,266.00px) scaleX(1.0180);">F</span>
<span class="t" style="font-size:12.5px;line-height:12.5px;color:#4c4e54;letter-spacing:0.000px;transform:translate(1315.70px,266.00px) scaleX(0.9700);">S</span>
<span class="t" style="font-size:12.5px;line-height:12.5px;color:#4c4e54;letter-spacing:0.000px;transform:translate(1339.92px,266.00px) scaleX(0.9695);">S</span>
<span class="t" style="font-size:12.5px;line-height:12.5px;color:#4c4e54;letter-spacing:0.000px;transform:translate(1362.74px,266.00px) scaleX(1.0850);">M</span>
<span class="t" style="font-size:12.5px;line-height:12.5px;color:#4c4e54;letter-spacing:0.000px;transform:translate(1388.43px,266.00px) scaleX(1.0631);">T</span>
<span class="t" style="font-size:12.5px;line-height:12.5px;color:#4c4e54;letter-spacing:0.000px;transform:translate(1411.06px,266.00px) scaleX(0.9669);">W</span>
<span class="t" style="font-size:12.5px;line-height:12.5px;color:#4c4e54;letter-spacing:0.000px;transform:translate(1436.81px,266.00px) scaleX(1.0649);">T</span>
<span class="t" style="font-size:12.5px;line-height:12.5px;color:#4c4e54;letter-spacing:0.000px;transform:translate(1460.81px,266.00px) scaleX(1.0161);">F</span>
<span class="t" style="font-size:12.5px;line-height:12.5px;color:#4c4e54;letter-spacing:0.000px;transform:translate(1485.06px,266.00px) scaleX(0.9672);">S</span>
<span class="t" style="font-size:12.5px;line-height:12.5px;color:#4c4e54;letter-spacing:0.000px;transform:translate(1509.21px,266.00px) scaleX(0.9672);">S</span>
<span class="t" style="font-size:12.5px;line-height:12.5px;color:#4c4e54;letter-spacing:0.000px;transform:translate(1531.99px,266.00px) scaleX(1.0850);">M</span>
<span class="t" style="font-size:12.5px;line-height:12.5px;color:#4c4e54;letter-spacing:0.000px;transform:translate(1557.72px,266.00px) scaleX(1.0649);">T</span>
<span class="t" style="font-size:14.6px;line-height:14.6px;color:#2b2d31;letter-spacing:0.020px;transform:translate(1361.53px,308.00px) scaleX(1.0247);">Weeks</span>
</div>
<div id="edge"></div>
</div>
</body></html>
